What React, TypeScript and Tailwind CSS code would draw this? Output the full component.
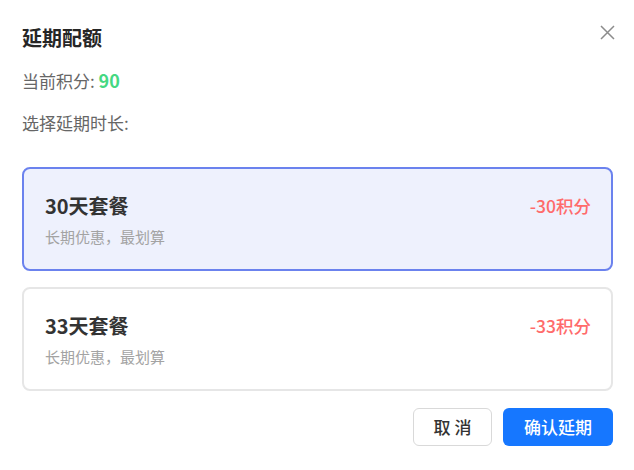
import React from "react";

const font = { fontFamily: '"Noto Sans CJK SC", "Noto Sans", sans-serif' };

function Plan({ days, cost, selected }: { days: number; cost: number; selected?: boolean }) {
  return (
    <div
      className={
        "h-[104px] rounded-[8px] border-2 flex items-start justify-between pl-[21px] pr-[20px] pt-[23px] " +
        (selected ? "border-[#6b82ee] bg-[#eef1fd]" : "border-[#e6e6e6] bg-white")
      }
    >
      <div className="flex flex-col">
        <div className="text-[20px] leading-[28px] font-bold text-[#333333]">{days}天套餐</div>
        <div className="mt-[6px] text-[15px] leading-[22px] text-[#a3a3a3]">长期优惠，最划算</div>
      </div>
      <div className="text-[17.5px] leading-[28px] font-medium text-[#ff6b6b]">-{cost}积分</div>
    </div>
  );
}

export default function App() {
  return (
    <div style={font} className="relative w-[634px] h-[470px] bg-white pl-[22px] pr-[21px] pt-[24px]">
      <button className="absolute right-[19px] top-[25px] w-[15px] h-[15px] text-[#8c8c8c]">
        <svg viewBox="0 0 15 15" width="15" height="15" fill="none" stroke="currentColor" strokeWidth="1.5">
          <path d="M1 1L14 14M14 1L1 14" />
        </svg>
      </button>
      <div className="text-[20px] leading-[28px] font-bold text-[#262626]">延期配额</div>
      <div className="mt-[16px] text-[17px] leading-[24px] text-[#666666]">
        当前积分: <span className="text-[18px] font-bold text-[#45d882]">90</span>
      </div>
      <div className="mt-[18px] text-[17px] leading-[24px] text-[#666666]">选择延期时长:</div>
      <div className="mt-[32px] flex flex-col gap-[16px]">
        <Plan days={30} cost={30} selected />
        <Plan days={33} cost={33} />
      </div>
      <div className="mt-[17px] flex justify-end gap-[11px]">
        <button className="w-[79px] h-[38px] rounded-[6px] border border-[#d9d9d9] bg-white text-[17px] font-medium text-[#333333]">
          取 消
        </button>
        <button className="w-[110px] h-[38px] rounded-[6px] bg-[#1677ff] text-[17px] font-medium text-white">
          确认延期
        </button>
      </div>
    </div>
  );
}
